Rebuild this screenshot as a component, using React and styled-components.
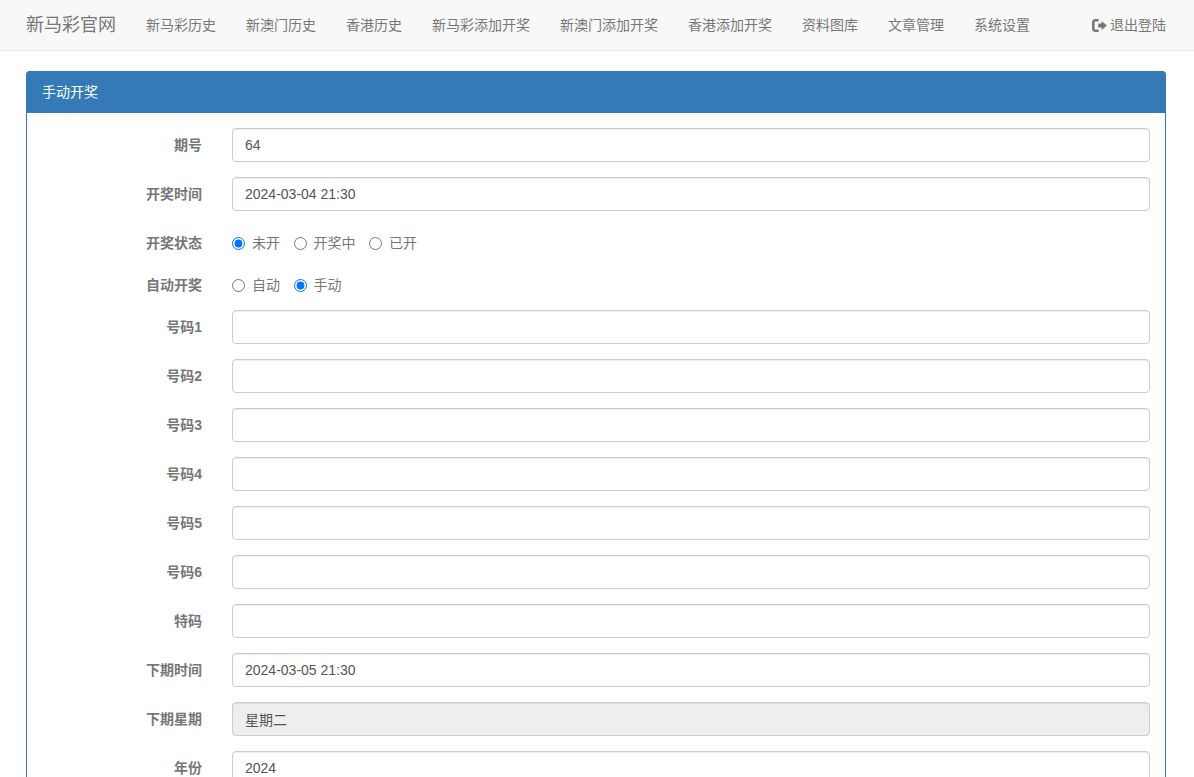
import React from 'react';
import styled, { createGlobalStyle } from 'styled-components';

const navItems = [
  '新马彩历史',
  '新澳门历史',
  '香港历史',
  '新马彩添加开奖',
  '新澳门添加开奖',
  '香港添加开奖',
  '资料图库',
  '文章管理',
  '系统设置',
];

const numberFields = ['号码1', '号码2', '号码3', '号码4', '号码5', '号码6', '特码'];

const App = () => (
  <>
    <GlobalStyle />
    <Navbar>
      <Brand href="#">新马彩官网</Brand>
      <NavList>
        {navItems.map((item) => (
          <NavLink href="#" key={item}>{item}</NavLink>
        ))}
      </NavList>
      <Logout href="#">
        <LogoutIcon viewBox="0 0 15 13" aria-hidden="true">
          <path d="M6.6 1.3H3.2A1.9 1.9 0 0 0 1.3 3.2v6.6a1.9 1.9 0 0 0 1.9 1.9h3.4" fill="none" stroke="currentColor" strokeWidth="2.6" />
          <path d="M9.6 2 15 6.5 9.6 11V8.4H6.2V4.6H9.6z" fill="currentColor" />
        </LogoutIcon>
        退出登陆
      </Logout>
    </Navbar>
    <Main>
      <Panel>
        <PanelHeading>手动开奖</PanelHeading>
        <PanelBody>
          <Row>
            <FieldLabel>期号</FieldLabel>
            <TextInput defaultValue="64" />
          </Row>
          <Row>
            <FieldLabel>开奖时间</FieldLabel>
            <TextInput defaultValue="2024-03-04 21:30" />
          </Row>
          <Row $tight>
            <FieldLabel>开奖状态</FieldLabel>
            <RadioGroup>
              <RadioLabel><input type="radio" name="status" defaultChecked /> 未开</RadioLabel>
              <RadioLabel><input type="radio" name="status" /> 开奖中</RadioLabel>
              <RadioLabel><input type="radio" name="status" /> 已开</RadioLabel>
            </RadioGroup>
          </Row>
          <Row $tight>
            <FieldLabel>自动开奖</FieldLabel>
            <RadioGroup>
              <RadioLabel><input type="radio" name="auto" /> 自动</RadioLabel>
              <RadioLabel><input type="radio" name="auto" defaultChecked /> 手动</RadioLabel>
            </RadioGroup>
          </Row>
          {numberFields.map((field) => (
            <Row key={field}>
              <FieldLabel>{field}</FieldLabel>
              <TextInput />
            </Row>
          ))}
          <Row>
            <FieldLabel>下期时间</FieldLabel>
            <TextInput defaultValue="2024-03-05 21:30" />
          </Row>
          <Row>
            <FieldLabel>下期星期</FieldLabel>
            <TextInput defaultValue="星期二" readOnly $locked />
          </Row>
          <Row>
            <FieldLabel>年份</FieldLabel>
            <TextInput defaultValue="2024" />
          </Row>
        </PanelBody>
      </Panel>
    </Main>
  </>
);

const GlobalStyle = createGlobalStyle`
  * {
    box-sizing: border-box;
  }

  html {
    overflow: hidden;
  }

  body {
    margin: 0;
    background-color: #fff;
    color: #777;
    font-family: "Liberation Sans", "Noto Sans CJK SC", sans-serif;
    font-size: 14px;
    line-height: 20px;
  }
`;

const Navbar = styled.nav`
  display: flex;
  align-items: center;
  height: 51px;
  padding: 0 28px 0 26px;
  background-color: #f8f8f8;
  border-bottom: 1px solid #e7e7e7;
`;

const Brand = styled.a`
  font-size: 18px;
  color: #777;
  text-decoration: none;
`;

const NavList = styled.div`
  display: flex;
  flex: 1;
  gap: 30px;
  margin-left: 30px;
`;

const NavLink = styled.a`
  color: #777;
  text-decoration: none;
`;

const Logout = styled.a`
  display: flex;
  align-items: center;
  gap: 3px;
  color: #777;
  text-decoration: none;
`;

const LogoutIcon = styled.svg`
  width: 15px;
  height: 13px;
`;

const Main = styled.main`
  padding: 20px 28px 0 26px;
`;

const Panel = styled.section`
  border: 1px solid #337ab7;
  border-radius: 4px;
  background-color: #fff;
`;

const PanelHeading = styled.header`
  height: 42px;
  margin: -1px -1px 0;
  padding: 11px 16px;
  background-color: #337ab7;
  border-radius: 4px 4px 0 0;
  color: #fff;
`;

const PanelBody = styled.div`
  padding: 15px;
`;

const Row = styled.div`
  display: grid;
  grid-template-columns: 160px 1fr;
  column-gap: 30px;
  align-items: center;
  margin-bottom: ${(props) => (props.$tight ? '8px' : '15px')};
`;

const FieldLabel = styled.label`
  font-weight: 700;
  text-align: right;
`;

const TextInput = styled.input`
  width: 100%;
  height: 34px;
  padding: 6px 12px;
  border: 1px solid #ccc;
  border-radius: 4px;
  box-shadow: inset 0 1px 1px rgba(0, 0, 0, 0.075);
  background-color: ${(props) => (props.$locked ? '#eee' : '#fff')};
  color: #555;
  font-family: inherit;
  font-size: 14px;
  outline: 0;
`;

const RadioGroup = styled.div`
  display: flex;
  align-items: center;
  gap: 13.5px;
  height: 34px;
`;

const RadioLabel = styled.label`
  display: flex;
  align-items: center;
  gap: 7px;

  input {
    width: 13px;
    height: 13px;
    margin: 0;
  }
`;

export default App;
